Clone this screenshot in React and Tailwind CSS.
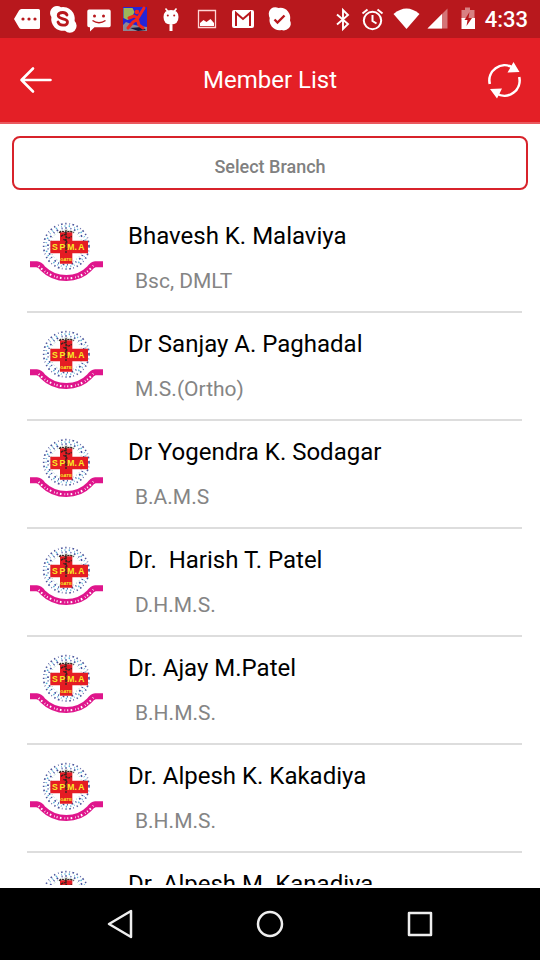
import { useState } from "react"

const members = [
    { name: "Bhavesh K. Malaviya", degree: "Bsc, DMLT" },
    { name: "Dr Sanjay A. Paghadal", degree: "M.S.(Ortho)" },
    { name: "Dr Yogendra K. Sodagar", degree: "B.A.M.S" },
    { name: "Dr.  Harish T. Patel", degree: "D.H.M.S." },
    { name: "Dr. Ajay M.Patel", degree: "B.H.M.S." },
    { name: "Dr. Alpesh K. Kakadiya", degree: "B.H.M.S." },
    { name: "Dr. Alpesh M. Kanadiya", degree: "B.H.M.S." },
]

// Notification icons share one drawing on a 300x38 strip
const Notifications = () => (
    <svg width="300" height="38" viewBox="0 0 300 38" fill="#fff" className="shrink-0" aria-hidden="true">
        <path d="M14 19l5-8.500q.8-1.500 2.500-1.500H38.500q1.500 0 1.500 1.500v17q0 1.500-1.500 1.500h-17q-1.700 0-2.500-1.500z" />
        <g fill="#b8181d">
            <circle cx="23" cy="19" r="1.600" />
            <circle cx="29" cy="19" r="1.600" />
            <circle cx="35" cy="19" r="1.600" />
        </g>
        <path d="M57 6a7 7 0 0 1 4 1.200A11.800 11.800 0 0 1 74.600 21 6.800 6.800 0 0 1 65 30.700 11.800 11.800 0 0 1 51.400 17 7 7 0 0 1 57 6z" />
        <path d="M67 15c-1-2-2.600-2.500-4.200-2.500-2.800 0-4.600 1.200-4.600 3.100 0 4.200 9.300 2.200 9.300 6.300 0 2.200-2 3.300-4.700 3.300-2.200 0-4-1-4.800-3.200" fill="none" stroke="#b8181d" strokeWidth="2.800" strokeLinecap="round" />
        <path d="M89 9.500h20q1.700 0 1.700 1.700v14.300q0 1.700-1.700 1.700H94.500L90 31.500v-4.300h-1q-1.700 0-1.700-1.700V11.200q0-1.700 1.700-1.700z" />
        <circle cx="94.500" cy="16" r="1.500" fill="#b8181d" />
        <circle cx="103.500" cy="16" r="1.500" fill="#b8181d" />
        <path d="M92.500 20.500q6.500 4.500 13 0" fill="none" stroke="#b8181d" strokeWidth="1.500" />
        <g>
            <path d="M123 7h24v24h-24z" fill="#2424d8" />
            <path d="M123.500 8h9l2 4-3 6-4 2-4-2z" fill="#9db65a" />
            <path d="M123 25l3-3 5 2 8 2 8 1v4h-24z" fill="#8b8794" />
            <path d="M130 28l12-1 4 3-8 1z" fill="#161a3d" />
            <path d="M136 20l-3 2-5 6M137 18l2 7 4 3M129 18l5-2 4 2 3-5 3-5" fill="none" stroke="#f2261d" strokeWidth="3" strokeLinecap="round" strokeLinejoin="round" />
            <circle cx="137" cy="12" r="2.300" fill="#f2261d" />
        </g>
        <path d="M165.500 8.500l2.500 3M176.500 8.500l-2.500 3" fill="none" stroke="#fff" strokeWidth="1.600" />
        <path d="M163.500 17q0-7 7.500-7t7.500 7q0 7.500-7.500 7.500t-7.500-7.500zM169.500 23h3v8h-3z" />
        <circle cx="167.800" cy="15.500" r="1" fill="#b8181d" />
        <circle cx="174.200" cy="15.500" r="1" fill="#b8181d" />
        <path d="M198.500 10.500h17v17h-17z" fill="none" stroke="#ffd5d5" strokeWidth="1.300" />
        <path d="M200 26v-3l3.500-3 3 2 4-3 3.500 4v3z" />
        <path d="M234 10h18q2 0 2 2v14q0 2-2 2h-18q-2 0-2-2V12q0-2 2-2z" />
        <path d="M236 26V13l7 6 7-6v13" fill="none" stroke="#b8181d" strokeWidth="2" />
        <path d="M273 7.500q3-.8 5.500.5 6-1 9.500 3.500 3 4 2 9 2 4-1 7.500-3.500 3.500-7.500 2-6 1-9.800-3.500-3-4-2-8.500-2-5 .2-8 1.300-2 3.100-2.500z" />
        <path d="M274.500 19.500l3 3 7-7" fill="none" stroke="#b8181d" strokeWidth="2.400" />
    </svg>
)

const SystemIcons = () => (
    <svg width="150" height="38" viewBox="329 0 150 38" fill="#fff" className="shrink-0" aria-hidden="true">
        <path d="M337 14.500l11 9.500-5 5V10l5 5-11 9.500" fill="none" stroke="#fff" strokeWidth="1.900" />
        <g fill="none" stroke="#fff" strokeWidth="2">
            <circle cx="372.500" cy="20.500" r="8.700" />
            <path d="M372.500 15v6l4 2.500M362.500 13.500l5-4M382.500 13.500l-5-4" />
        </g>
        <path d="M393.500 14q13-11 26 0L406.500 29z" />
        <path d="M427.500 28.500l20-20v20z" opacity=".4" />
        <path d="M427.500 28.500L442 14v14.500z" />
        <path d="M461.500 10h3.500V7.500h5V10h4.500v9h-13z" opacity=".45" />
        <path d="M461.500 18h13.500v11h-13.500z" />
        <path d="M469.500 12l-5 8h3l-1 6 5.500-8h-3.500z" fill="#b8181d" />
    </svg>
)

const MemberLogo = () => (
    <svg width="76" height="62" viewBox="22 20 228 186" className="shrink-0" role="img" aria-label="S.P.M.A">
        <g fill="none">
            <circle cx="140" cy="96" r="68" stroke="#4a559c" strokeWidth="5" strokeDasharray="4 9 2 7 5 8" />
            <circle cx="140" cy="96" r="61" stroke="#57b5d8" strokeWidth="5" strokeDasharray="3 10 4 13 2 8" />
            <circle cx="140" cy="96" r="55" stroke="#3d4b9c" strokeWidth="5" strokeDasharray="3 8 5 11" />
            <circle cx="140" cy="96" r="49" stroke="#80c9b2" strokeWidth="3" strokeDasharray="3 9 2 7" />
        </g>
        <path d="M121 54h37v25h47v38h-47v31h-37v-31H92V79h29z" fill="#e51c24" />
        <path d="M118 55q10-8 20 0 10-8 24 0M124 66q14-10 16 0t16 0M139 46v72M131 75q16 6 8 13t4 15" fill="none" stroke="#37231f" strokeWidth="4" strokeDasharray="7 2" />
        <g fill="#f7ee27" textAnchor="middle" className="font-['Liberation_Sans',sans-serif] font-bold">
            <text x="106" y="108" className="text-[26px]">S</text>
            <text x="128" y="108" className="text-[26px]">P</text>
            <text x="157" y="108" className="text-[26px]">M.</text>
            <text x="185" y="108" className="text-[26px]">A</text>
            <text x="139" y="139" className="text-[13px]">GATE</text>
        </g>
        <path d="M31 150h20q10 1 18 12 29 29 71 29t69-28q9-12 18-13h23" fill="none" stroke="#df168c" strokeWidth="18" />
        <path d="M57 155q35 37 84 37t80-38" fill="none" stroke="#fff" strokeWidth="6" strokeDasharray="3 7 5 9 2 6" />
    </svg>
)

const MemberRow = ({ member }) => (
    <li className="flex h-27 shrink-0 border-b-2 border-[#dddddd] pt-4">
        <MemberLogo />
        <div className="ml-[25px] whitespace-pre">
            <h2 className="text-2xl leading-[30px] text-black">{member.name}</h2>
            <p className="mt-4 ml-[7px] text-[21px] leading-7 text-[#858585]">{member.degree}</p>
        </div>
    </li>
)

const App = () => {
    const [list, setList] = useState(members)

    return (
        <div className="flex h-screen flex-col bg-white font-[Roboto,sans-serif]">
            <div className="flex h-[38px] shrink-0 items-center justify-between bg-[#b8181d] pr-3 text-white">
                <Notifications />
                <div className="flex items-center">
                    <SystemIcons />
                    <span className="ml-1.5 text-[22px] font-medium">4:33</span>
                </div>
            </div>

            <header className="flex h-[86px] shrink-0 items-center justify-between border-b-2 border-[#ea5a60] bg-[#e41f26] px-4 text-white">
                <button type="button" aria-label="Back">
                    <svg width="38" height="40" viewBox="0 0 38 40" fill="none" stroke="#fff" strokeWidth="2.600" strokeLinecap="round" strokeLinejoin="round">
                        <path d="M34.500 20H5.500M17 8.500L5.500 20 17 31.500" />
                    </svg>
                </button>
                <h1 className="text-2xl">Member List</h1>
                <button type="button" aria-label="Refresh" onClick={() => setList([...members])}>
                    <svg width="38" height="40" viewBox="0 0 38 40" fill="none" stroke="#fff" strokeWidth="2.600">
                        <path d="M3.800 24A15.200 15.200 0 0 1 26.500 7.500M33.200 17A15.200 15.200 0 0 1 10.500 33.500" />
                        <path d="M27.500 2l6 10-12 .5zM4 29l12-.5-5 10z" fill="#fff" stroke="none" />
                    </svg>
                </button>
            </header>

            <main className="flex min-h-0 flex-1 flex-col pt-3">
                <button type="button" className="mx-3 h-[54px] shrink-0 rounded-lg border-2 border-[#d8232b] pt-2 text-lg font-medium text-[#808080]">
                    Select Branch
                </button>
                <ul className="mt-[15px] mr-[18px] mb-[3px] ml-[27px] flex min-h-0 flex-1 flex-col overflow-hidden">
                    {list.map((member) => (
                        <MemberRow key={member.name} member={member} />
                    ))}
                </ul>
            </main>

            <nav className="flex h-18 shrink-0 items-center justify-center gap-[110px] bg-black">
                <button type="button" aria-label="Back">
                    <svg width="40" height="40" viewBox="0 0 40 40" fill="none" stroke="#eee" strokeWidth="2.500" strokeLinejoin="round">
                        <path d="M31 7v26L9 20z" />
                    </svg>
                </button>
                <button type="button" aria-label="Home">
                    <svg width="40" height="40" viewBox="0 0 40 40" fill="none" stroke="#eee" strokeWidth="2.500">
                        <circle cx="20" cy="20" r="12" />
                    </svg>
                </button>
                <button type="button" aria-label="Recent apps">
                    <svg width="40" height="40" viewBox="0 0 40 40" fill="none" stroke="#eee" strokeWidth="2.500" strokeLinejoin="round">
                        <rect x="9" y="9" width="22" height="22" />
                    </svg>
                </button>
            </nav>
        </div>
    )
}

export default App
